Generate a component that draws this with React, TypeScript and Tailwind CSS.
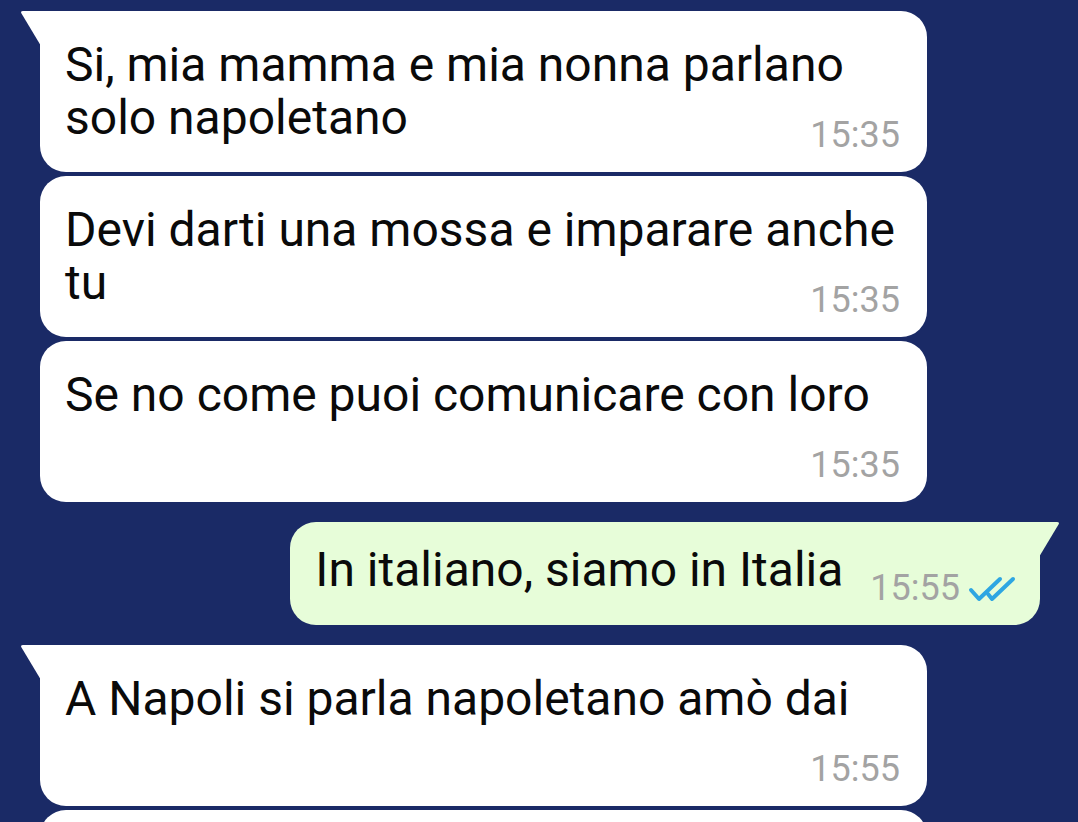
import React from "react";

const font = { fontFamily: "Roboto, 'Noto Sans', sans-serif" };

const LeftTail = () => (
  <svg className="absolute -left-[20px] top-0" width="21" height="36" viewBox="0 0 21 36">
    <path d="M21 0 H3 Q0 0 1.5 2.5 L21 35 Z" fill="#ffffff" />
  </svg>
);

const RightTail = () => (
  <svg className="absolute -right-[20px] top-0" width="21" height="36" viewBox="0 0 21 36">
    <path d="M0 0 H18 Q21 0 19.5 2.5 L0 35 Z" fill="#e7fdd9" />
  </svg>
);

const DoubleCheck = () => (
  <svg width="48" height="26" viewBox="0 0 48 26" fill="none" stroke="#2ea6e2" strokeWidth="4" strokeLinecap="round" strokeLinejoin="round">
    <path d="M3 14 L11 23 L32 3" />
    <path d="M20 18 L24 23 L45 3" />
  </svg>
);

const Incoming = ({ text, time, tail }: { text: React.ReactNode; time: string; tail?: boolean }) => (
  <div
    className={`relative ml-[40px] w-[887px] h-[161px] shrink-0 bg-white rounded-[26px] ${tail ? "rounded-tl-none" : ""} pl-[25px] pr-[27px] pt-[27px] pb-[19px] grid`}
  >
    {tail && <LeftTail />}
    <div className="col-start-1 row-start-1 text-[48px] leading-[53px] text-[#0a0a0a]">{text}</div>
    <div className="col-start-1 row-start-1 self-end justify-self-end text-[36px] leading-[36px] text-[#a3a3a3]">{time}</div>
  </div>
);

export default function App() {
  return (
    <div className="h-[822px] overflow-hidden bg-[#1a2a66] pt-[11px]" style={font}>
      <div className="flex flex-col">
        <Incoming tail text={<>Si, mia mamma e mia nonna parlano<br />solo napoletano</>} time="15:35" />
        <div className="h-[4px]" />
        <Incoming text={<>Devi darti una mossa e imparare anche<br />tu</>} time="15:35" />
        <div className="h-[4px]" />
        <Incoming text="Se no come puoi comunicare con loro" time="15:35" />

        <div className="h-[20px]" />
        {/* outgoing */}
        <div className="relative ml-auto mr-[38px] h-[103px] shrink-0 bg-[#e7fdd9] rounded-[26px] rounded-tr-none pl-[25px] pr-[24px] flex">
          <RightTail />
          <div className="pt-[21px] text-[48px] leading-[53px] text-[#0a0a0a]">In italiano, siamo in Italia</div>
          <div className="self-end pb-[19px] ml-[27px] flex items-end gap-[8px]">
            <span className="text-[36px] leading-[36px] text-[#a3a3a3]">15:55</span>
            <span className="mb-[4px]"><DoubleCheck /></span>
          </div>
        </div>

        <div className="h-[20px]" />
        <Incoming tail text="A Napoli si parla napoletano amò dai" time="15:55" />
        <div className="h-[4px]" />
        <div className="ml-[40px] w-[887px] h-[161px] shrink-0 bg-white rounded-[26px]" />
      </div>
    </div>
  );
}
